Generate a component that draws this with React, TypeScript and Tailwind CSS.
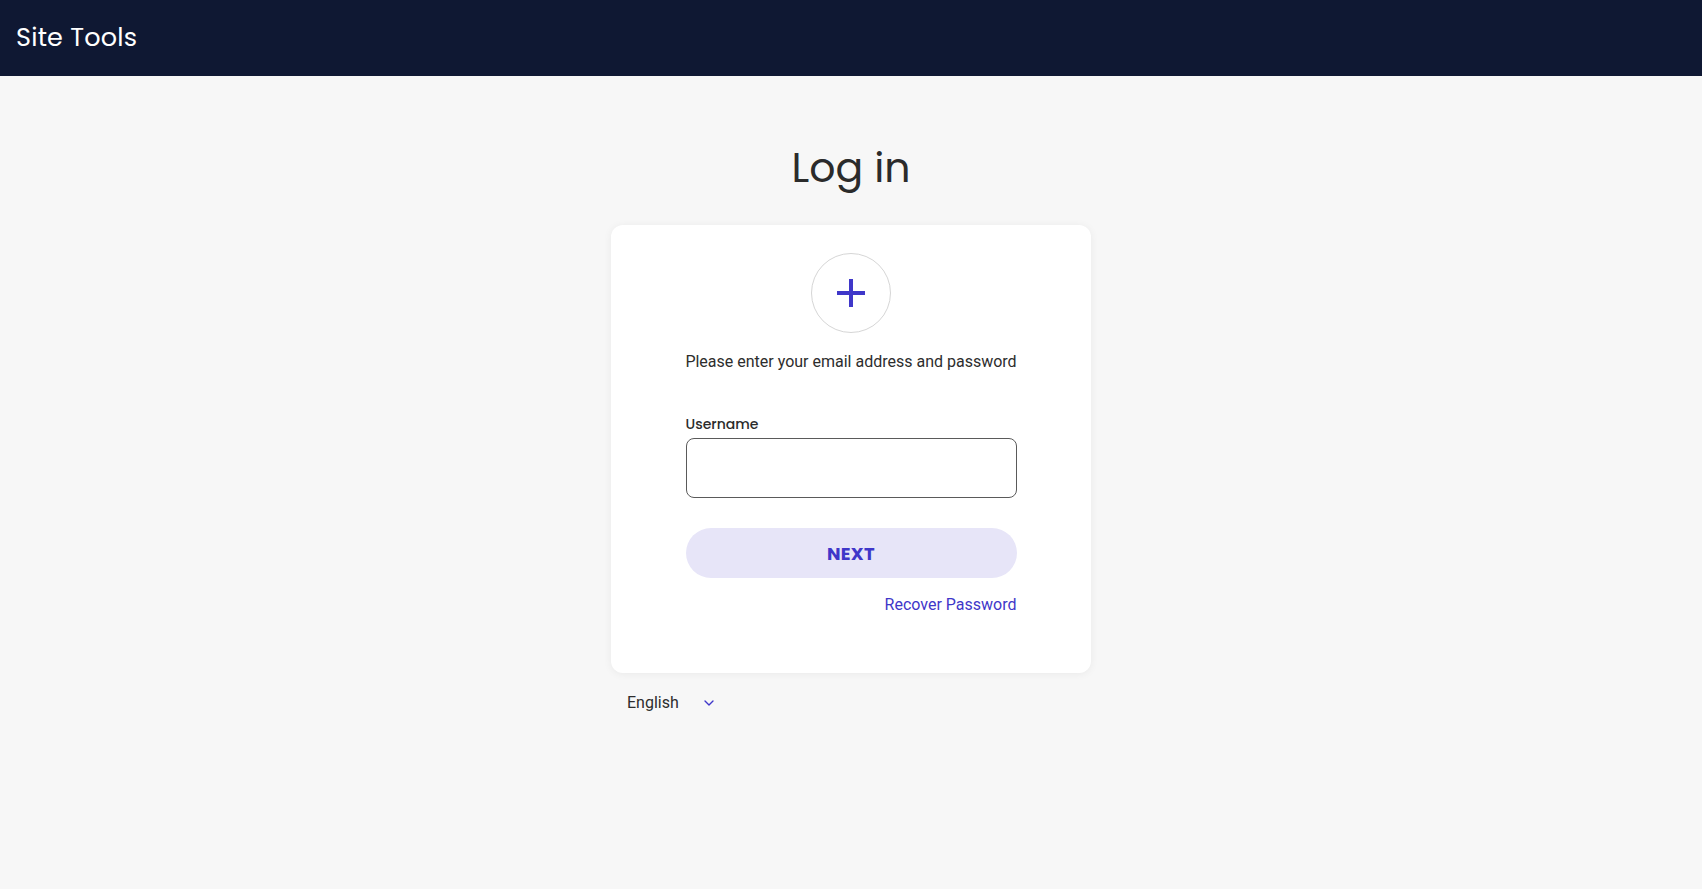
import { ChevronDown } from "lucide-react";

const poppins = "font-['Poppins','Inter','Noto_Sans',sans-serif]";
const roboto = "font-['Roboto','Liberation_Sans',sans-serif]";

export default function App() {
    return (
        <div className="min-h-screen bg-[#f7f7f7] flex flex-col">
            <header className="h-[76px] bg-[#0f1833] flex items-center px-4 shrink-0">
                <span className={`${poppins} text-white text-[25.5px] leading-none font-normal tracking-[0.2px]`}>
                    Site Tools
                </span>
            </header>

            <main className="flex flex-col items-center">
                <h1 className={`${poppins} mt-[66px] text-[41px] leading-[52px] text-[#2b2b2b] font-normal`}>
                    Log in
                </h1>

                <section className="mt-[31px] w-[480px] h-[448px] bg-white rounded-[12px] shadow-[0_1px_8px_rgba(0,0,0,0.06)] flex flex-col items-center pt-[28px]">
                    <div className="w-[80px] h-[80px] rounded-full border border-[#d6d6d6] flex items-center justify-center">
                        <svg width="30" height="30" viewBox="0 0 30 30" fill="none">
                            <path d="M15 1v28M1 15h28" stroke="#3f37c9" strokeWidth="4" />
                        </svg>
                    </div>

                    <p className={`${roboto} mt-[19px] text-[16px] leading-[20px] text-[#2d2d2d]`}>
                        Please enter your email address and password
                    </p>

                    <div className="w-[331px] mt-[43px] flex flex-col">
                        <label className={`${poppins} text-[14px] leading-[18px] font-medium text-[#2b2b2b]`}>
                            Username
                        </label>
                        <input
                            type="text"
                            className="mt-[5px] h-[60px] w-full rounded-[8px] border border-[#5a5a5a] bg-white px-3 outline-none"
                        />
                        <button
                            className={`${poppins} mt-[30px] h-[50px] w-full rounded-full bg-[#e7e5f8] text-[#3f37c9] text-[18px] font-bold tracking-[0.3px]`}
                        >
                            NEXT
                        </button>
                        <a className={`${roboto} self-end mt-[17px] text-[16px] leading-[20px] text-[#3f37c9] cursor-pointer`}>
                            Recover Password
                        </a>
                    </div>
                </section>

                <div className="w-[480px] mt-[20px] flex items-center pl-[16px]">
                    <span className={`${roboto} text-[16px] leading-[20px] text-[#2d2d2d]`}>English</span>
                    <ChevronDown className="ml-[22px] w-[16px] h-[16px] text-[#3f37c9]" strokeWidth={2} />
                </div>
            </main>
        </div>
    );
}
